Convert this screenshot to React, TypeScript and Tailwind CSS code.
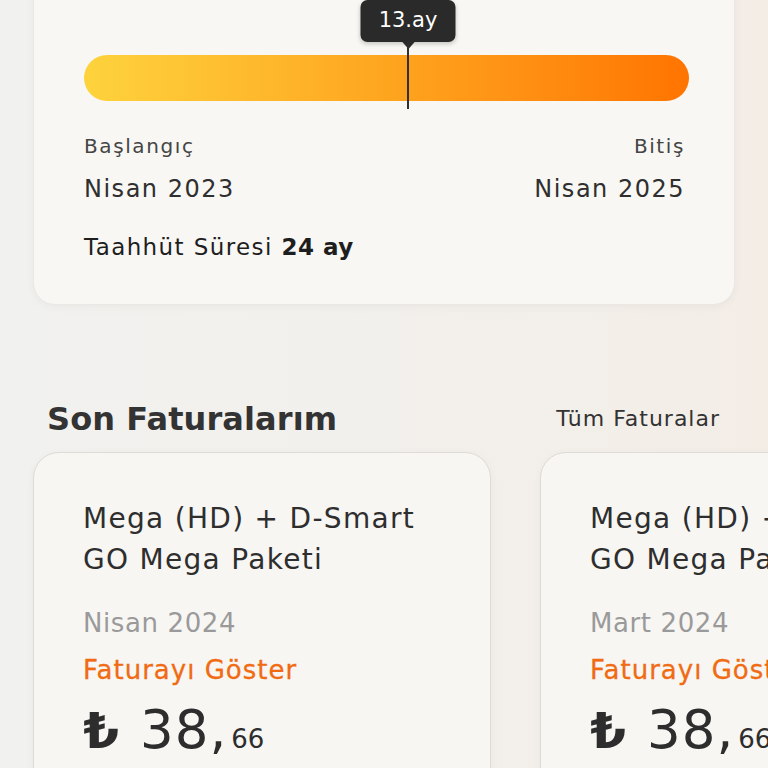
import React from "react";

const font = { fontFamily: "'DejaVu Sans', sans-serif" };

function InvoiceCard({ month }: { month: string }) {
  return (
    <div className="shrink-0 w-[458px] h-[360px] rounded-[26px] border border-[#dedbd6] bg-[#f7f6f3] shadow-[0_2px_8px_rgba(0,0,0,0.04)] pl-[49px] pt-[45px]">
      <div className="text-[28px] leading-[41px] tracking-[1.3px] text-[#2e2e2e] whitespace-nowrap">
        Mega (HD) + D-Smart
        <br />
        GO Mega Paketi
      </div>
      <div className="mt-[25px] text-[26px] leading-[36px] tracking-[0.6px] text-[#9a9a9a] whitespace-nowrap">{month}</div>
      <div className="mt-[11px] text-[26px] leading-[36px] tracking-[1px] text-[#f06b12] whitespace-nowrap [-webkit-text-stroke:0.3px_#f06b12]">
        Faturayı Göster
      </div>
      <div className="mt-[12px] flex items-baseline text-[#2d2d2d] whitespace-nowrap">
        <span
          className="inline-block origin-left scale-x-125 text-[50px] leading-[60px] font-bold w-[37px]"
          style={{ fontFamily: "Roboto, sans-serif" }}
        >
          ₺
        </span>
        <span className="ml-[20px] text-[53px] leading-[60px] tracking-[1px]">38,</span>
        <span className="ml-[4px] text-[26px] leading-[30px]">66</span>
      </div>
    </div>
  );
}

export default function App() {
  return (
    <div
      className="w-[768px] h-[768px] overflow-hidden bg-gradient-to-r from-[#f1f1ef] via-[#f2f0ec] to-[#f3ede6]"
      style={font}
    >
      {/* Top commitment card */}
      <div className="mx-[33px] -mt-[30px] w-[702px] rounded-[22px] border border-[#ebe8e3] bg-[#f8f7f4] shadow-[0_2px_8px_rgba(0,0,0,0.04)] pt-[30px] pb-[41px]">
        <div className="relative pl-[50px] pr-[45px] pt-[54px]">
          <div className="h-[46px] rounded-full bg-gradient-to-r from-[#fdd33c] via-[#fea51e] to-[#ff7400]" />
          {/* marker */}
          <div className="absolute -top-[1px] left-[374px] w-0">
            <div className="absolute left-1/2 -translate-x-1/2 top-0 flex flex-col items-center">
              <div className="w-[95px] h-[42px] rounded-[7px] bg-[#2a2a2a] flex items-center justify-center text-white text-[21px] shadow-[0_2px_4px_rgba(0,0,0,0.2)]">
                13.ay
              </div>
              <div className="w-0 h-0 border-l-[7px] border-r-[7px] border-t-[8px] border-l-transparent border-r-transparent border-t-[#2a2a2a] -mt-[1px]" />
            </div>
            <div className="absolute left-1/2 -translate-x-1/2 top-[42px] w-[2px] h-[67px] bg-[#2f2f2f]" />
          </div>
        </div>
        <div className="pl-[50px] pr-[49px]">
          <div className="mt-[31px] flex justify-between text-[20px] leading-[28px] tracking-[1.6px] text-[#454545]">
            <span>Başlangıç</span>
            <span>Bitiş</span>
          </div>
          <div className="mt-[13px] flex justify-between text-[24px] leading-[32px] tracking-[1.5px] text-[#2f2f2f]">
            <span>Nisan 2023</span>
            <span>Nisan 2025</span>
          </div>
          <div className="mt-[26px] text-[23px] leading-[32px] tracking-[1.4px] text-[#1e1e1e]">
            Taahhüt Süresi <span className="font-bold tracking-[0.5px]">24 ay</span>
          </div>
        </div>
      </div>

      {/* Section header */}
      <div className="mt-[94px] flex items-center justify-between pl-[47px] pr-[48px]">
        <h2 className="text-[32px] leading-[40px] font-bold text-[#333333] tracking-[0.1px]">Son Faturalarım</h2>
        <span className="text-[22px] leading-[28px] tracking-[1px] text-[#333333]">Tüm Faturalar</span>
      </div>

      {/* Cards */}
      <div className="mt-[13px] flex gap-[49px] pl-[33px]">
        <InvoiceCard month="Nisan 2024" />
        <InvoiceCard month="Mart 2024" />
      </div>
    </div>
  );
}
